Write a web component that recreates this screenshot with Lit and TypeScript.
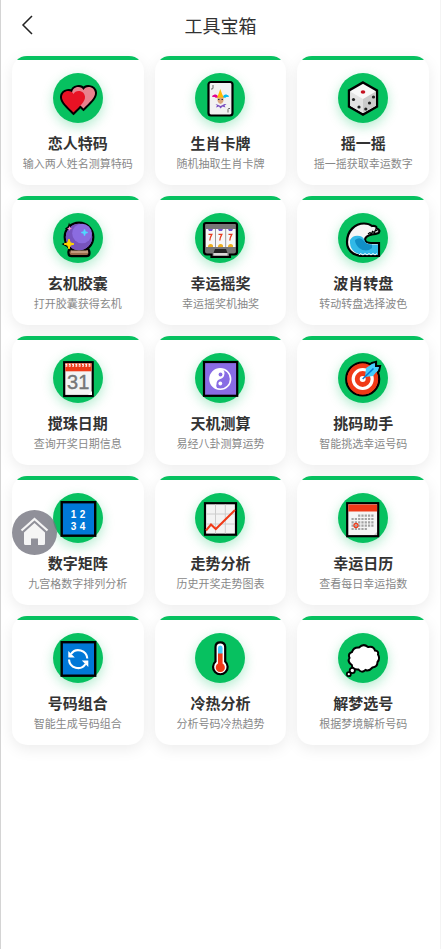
import { LitElement, html, css, svg, type SVGTemplateResult } from "lit";
import { customElement, property } from "lit/decorators.js";

const HEART =
  "M0 -6.5 C-2 -11 -10.5 -10.5 -11.5 -4 C-12 1 -6 6 0 12 C6 6 12 1 11.5 -4 C10.5 -10.5 2 -11 0 -6.5Z";

const icons: Record<string, SVGTemplateResult> = {
  hearts: svg`
    <g stroke="#000" stroke-width="4" stroke-linejoin="miter">
      <path d=${HEART} transform="translate(30.5 23.5)" />
      <path d=${HEART} transform="translate(20.5 27.5)" />
    </g>
    <path d=${HEART} transform="translate(30.5 23.5)" fill="#e8828e" />
    <path d=${HEART} transform="translate(20.5 27.5)" fill="#e81224" />`,
  joker: svg`
    <rect x="13.500" y="9" width="24" height="33.500" rx="2.500" fill="#f2f2f2" stroke="#000" stroke-width="2.200" />
    <path d="M18 12v3q0 1.500-2 1" fill="none" stroke="#666" />
    <path d="M33 39.500v-3q0-1.500 2-1" fill="none" stroke="#666" />
    <path d="M20 24q-3-3-2 0q1-3.500 4-1.500l2 2z" fill="#e3008c" stroke="#e3008c" />
    <path d="M31 24q3-3 2 0q-1-3.500-4-1.500l-2 2z" fill="#00bcf2" stroke="#00bcf2" />
    <path d="M22 25l1.500-4 1.800-5 1.800 5L29 25z" fill="#ffb900" />
    <path d="M20.500 31l3 1 2 1 4-2 2 0-2 1.500 1 2-3-1-2 2-1.500-2-3 1 1-2z" fill="#7a4fc0" />
    <path d="M22.500 24.500h6v3.500q-1 3-3 3T22.500 28z" fill="#d9a47c" />
    <path d="M23 26.500h1.500M26.500 26.500H28" stroke="#333" />`,
  dice: svg`
    <path d="M25 9.500L39 17.500V33.500L25 41.500L11 33.500V17.500Z" fill="#f8f8f8" stroke="#000" stroke-width="2.400" />
    <path d="M12.200 18.500L25 26V40L12.200 32.800Z" fill="#e3e3e3" />
    <path d="M37.800 18.500L25 26V40L37.800 32.800Z" fill="#cbcbcb" />
    <ellipse cx="25" cy="19" rx="2.300" ry="1.700" fill="#c50f1f" />
    <g fill="#222"><circle cx="15.500" cy="26.500" r="1.600" /><circle cx="21" cy="34" r="1.600" />
    <circle cx="35.500" cy="24" r="1.600" /><circle cx="31.500" cy="30" r="1.600" /><circle cx="27.800" cy="36" r="1.600" /></g>`,
  crystal: svg`
    <path d="M17 36q-2 1-1.500 4q0 3.200 3 3.200h15q3 0 3-3.200q0-3.200-2-4.200z" fill="#9a6b4b" stroke="#000" stroke-width="2.200" />
    <circle cx="26" cy="24" r="14.300" fill="#8764d0" stroke="#000" stroke-width="2.200" />
    <path d="M16 9.500l1.500 4 3 1-2 3-3 1-3.500-3 3-2z" fill="#000" />
    <path d="M8.500 31l5-2 2.500-4 4 5 3 2-4 1.500-2 5.500-3-5z" fill="#000" />
    <circle cx="26" cy="24" r="13.200" fill="#7653bd" />
    <circle cx="29" cy="20.500" r="9.800" fill="#8b6ce0" />
    <path d="M18 37.500h17v2.500H18z" fill="#c29a7d" />
    <path d="M16 26l1.300 3.700L21 31l-3.700 1.300L16 36l-1.300-3.700L11 31l3.700-1.300z" fill="#ffd500" stroke="#ffd500" />
    <path d="M31.500 16l1 2.500 2.500 1-2.500 1-1 2.500-1-2.500-2.500-1 2.500-1z" fill="#50d8ff" stroke="#50d8ff" stroke-width=".5" />
    <path d="M16.500 13l.7 1.800 1.800.7-1.800.7-.7 1.800-.7-1.800-1.800-.7 1.800-.7z" fill="#f58ac4" />`,
  slot: svg`
    <path d="M11 10h29q2 0 2 2v27q0 2.500-3 2.500h-4V44H16.500v-2.500H12q-3 0-3-3V12q0-2 2-2z" fill="#767676" stroke="#000" stroke-width="2.200" />
    <path d="M11 16h29.500v18H11z" fill="#f7f7f7" />
    <path d="M20.500 16v18M30.700 16v18" stroke="#999" />
    <path d="M13 16h5l-1 2h-3zM23 16h5l-1 2h-3zM33 16h5l-1 2h-3z" fill="#7357d1" />
    <path d="M13 34q0-3 2.700-3T18 34zM23 34q0-3 2.700-3T28 34zM33 34q0-3 2.700-3T38 34z" fill="#efb020" />
    <g fill="none" stroke="#e83a1c" stroke-width="1.300"><path d="M13.500 21.300h3.300q-1.800 3-2 6.200M23.500 21.300h3.300q-1.800 3-2 6.200M33.500 21.300h3.300q-1.800 3-2 6.200" /></g>
    <path d="M20 36h11l1.500 4h-14z" fill="#222" />
    <path d="M18.500 40h14v2.500h-14z" fill="#d8d8d8" />`,
  wave: svg`
    <path d="M41 43H25C14 43 9 36 9 29C9 18 17 10.500 26 10.500Q31 10.500 34 13Q39 12.500 38.500 15.500Q43 17 40.500 20Q38 21 34 21.500Q27 23 27 27Q28 30 33 30H41Z" fill="#f5f5f5" stroke="#000" stroke-width="2.200" />
    <path d="M12 27Q15 21.500 22 23Q26 24 27 28.500Q29 31.500 33 31.500H40V42H25Q11 40 12 27Z" fill="#31b9e8" />
    <path d="M17 27Q22 23 26 28Q29 32 34 31.500V35Q28 40 21 35Q17 31 17 27Z" fill="#118fc7" />
    <path d="M30 21l2-1.500 1.500 1.500 1-2.500 2 1 1-2.500 2 1" fill="none" stroke="#000" stroke-width="1.300" />
    <path d="M21 42l1.500-1.500L25 42l2-1.500 2 1.500 2-1.500 2 1.500 2-1.500 2 1.500 2-1.500" fill="none" stroke="#fff" />`,
  date: svg`
    <rect x="11.200" y="9.200" width="28.500" height="33.800" fill="#f4f4f4" stroke="#000" stroke-width="2.200" />
    <path d="M12.300 10.300h26.300v8H12.300z" fill="#f03a17" />
    <path d="M12.500 12.200h26" stroke="#fff" stroke-width="3" stroke-dasharray="1.800 1.500" />
    <path d="M12.500 12.700h26" stroke="#f03a17" stroke-width="1" stroke-dasharray=".8 2.500" />
    <text x="25.200" y="36" class="day">31</text>
    <path d="M35 42l4-4v4z" fill="#fff" />`,
  yinyang: svg`
    <rect x="9" y="9" width="33.200" height="33.800" fill="#886ce4" stroke="#000" stroke-width="2.200" />
    <circle cx="25.300" cy="26" r="10.300" fill="none" stroke="#fff" stroke-width="1.600" />
    <path d="M25.300 15.500A10.500 10.500 0 0 0 25.300 36.500A4 4 0 0 1 21.500 31Q21.500 27 25.300 26T29.500 20.500Q29.500 16 25.300 15.500Z" fill="#fff" />
    <circle cx="25.500" cy="21.500" r="1.900" fill="#886ce4" /><circle cx="25.300" cy="30.500" r="1.900" fill="#fff" />`,
  target: svg`
    <circle cx="24.700" cy="26" r="16.500" fill="#f03a17" stroke="#000" stroke-width="2.200" />
    <path d="M26 21l2-7 6-4 4-1v4h4l-1 5-5 6-7 1z" fill="#50d8ff" stroke="#000" stroke-width="2.200" />
    <circle cx="24.700" cy="26" r="15.400" fill="#f03a17" />
    <circle cx="24.700" cy="26" r="9.500" fill="none" stroke="#fff" stroke-width="3.200" />
    <circle cx="24.700" cy="26" r="3" fill="#fff" />
    <path d="M27 24l1-9 6-4 3-.8V14h4l-1 3-5 6z" fill="#45cbfb" />
    <path d="M24.700 26L35.500 15.500" stroke="#0078d4" stroke-width="1.600" />`,
  numbers: svg`
    <rect x="8.700" y="9.200" width="33.500" height="33.500" fill="#0078d7" stroke="#000" stroke-width="2.400" />
    <text x="20.500" y="25" class="cell">1</text><text x="29.500" y="25" class="cell">2</text>
    <text x="20.500" y="37" class="cell">3</text><text x="29.500" y="37" class="cell">4</text>`,
  chart: svg`
    <rect x="10" y="10.200" width="31" height="31.500" fill="#f3f3f3" stroke="#000" stroke-width="2.200" />
    <path d="M20.500 11.500v29M30.300 11.500v29M11.500 21h28.500M11.500 31h28.500" stroke="#ccc" />
    <path d="M11 37.500l5-6 4.800 4.500L40 17" fill="none" stroke="#f03a17" stroke-width="2" />`,
  calendar: svg`
    <rect x="9.200" y="10.200" width="31" height="33" fill="#f5f5f5" stroke="#000" stroke-width="2.200" />
    <path d="M10.300 11.500h28.800v7H10.300z" fill="#f03a17" />
    <g stroke="#a3a3a3" stroke-width="2.200" stroke-dasharray="2.200 1.100">
      <path d="M20.100 22.700h16.500M13.500 26h23M13.500 29.300h23M13.500 32.600h23M13.500 36h16.500" />
    </g>
    <circle cx="18" cy="32.500" r="2" fill="none" stroke="#f03a17" stroke-width="1.300" />
    <path d="M36 42l3-3v3z" fill="#ccc" />`,
  refresh: svg`
    <rect x="8.700" y="9.200" width="33.500" height="33.500" fill="#0078d7" stroke="#000" stroke-width="2.400" />
    <path d="M18 21A9 9 0 0 1 34.300 25.500M16 26.500A9 9 0 0 0 32.500 31" fill="none" stroke="#fff" stroke-width="2.100" />
    <path d="M15.300 18v6.500h6.500zM35.300 34v-6.500h-6.500z" fill="#fff" />`,
  thermo: svg`
    <path d="M20.500 14Q20.500 9.300 25.300 9.300T30.200 14V28.500A7.300 7.300 0 1 1 20.500 28.500Z" fill="#fff" stroke="#000" stroke-width="2.200" />
    <path d="M23 15q0-2.500 2.300-2.500t2.300 2.500v6H23z" fill="#45cbfb" />
    <path d="M23 20.500h4.600V30.500A4.600 4.600 0 1 1 23 30.500Z" fill="#f03a17" />`,
  thought: svg`
    <path d="M21 14.500Q25.500 10 30 14Q35.500 12.500 37 17.500Q41 18 40 21.500Q42.500 25.500 39.500 29Q39.500 34 34.500 34.500Q31 38.500 27.500 37Q23.500 40.500 20.500 36.500Q14 37 13.800 32Q9 28.500 11.500 25Q9.500 20.500 14 19Q15.500 14 21 14.500Z" fill="#fff" stroke="#000" stroke-width="2" />
    <circle cx="14.300" cy="37.500" r="2.600" fill="#fff" stroke="#000" stroke-width="1.800" />
    <circle cx="10.800" cy="41.200" r="2" fill="#fff" stroke="#000" stroke-width="1.800" />`,
};

interface Tool {
  icon: string;
  name: string;
  note: string;
}

const tools: Tool[] = [
  { icon: "hearts", name: "恋人特码", note: "输入两人姓名测算特码" },
  { icon: "joker", name: "生肖卡牌", note: "随机抽取生肖卡牌" },
  { icon: "dice", name: "摇一摇", note: "摇一摇获取幸运数字" },
  { icon: "crystal", name: "玄机胶囊", note: "打开胶囊获得玄机" },
  { icon: "slot", name: "幸运摇奖", note: "幸运摇奖机抽奖" },
  { icon: "wave", name: "波肖转盘", note: "转动转盘选择波色" },
  { icon: "date", name: "搅珠日期", note: "查询开奖日期信息" },
  { icon: "yinyang", name: "天机测算", note: "易经八卦测算运势" },
  { icon: "target", name: "挑码助手", note: "智能挑选幸运号码" },
  { icon: "numbers", name: "数字矩阵", note: "九宫格数字排列分析" },
  { icon: "chart", name: "走势分析", note: "历史开奖走势图表" },
  { icon: "calendar", name: "幸运日历", note: "查看每日幸运指数" },
  { icon: "refresh", name: "号码组合", note: "智能生成号码组合" },
  { icon: "thermo", name: "冷热分析", note: "分析号码冷热趋势" },
  { icon: "thought", name: "解梦选号", note: "根据梦境解析号码" },
];

@customElement("tool-card")
export class ToolCard extends LitElement {
  @property({ attribute: false }) tool!: Tool;

  static styles = css`
    :host {
      display: block;
      min-width: 0;
    }
    .card {
      display: flex;
      flex-direction: column;
      align-items: center;
      box-sizing: border-box;
      padding-bottom: 12px;
      border-radius: 15px;
      background: linear-gradient(#07c160, #07c160) top / 100% 4px no-repeat #fff;
      box-shadow: 0 4px 15px rgba(0, 0, 0, 0.08);
      text-decoration: none;
      text-align: center;
      white-space: nowrap;
    }
    .disc {
      width: 50px;
      height: 50px;
      margin: 17px 0 10px;
      border-radius: 50%;
      background: #07c160;
      box-shadow: 0 4px 12px rgba(7, 193, 96, 0.3);
    }
    .icon {
      display: block;
      width: 50px;
      height: 50px;
      fill: #000;
    }
    .day {
      font: 20px "Liberation Sans", sans-serif;
      fill: #767676;
      stroke: #767676;
      stroke-width: 0.4;
      text-anchor: middle;
    }
    .cell {
      font: bold 10px "Liberation Sans", sans-serif;
      fill: #fff;
      text-anchor: middle;
    }
    .name {
      font-size: 15px;
      line-height: 20px;
      font-weight: 700;
      color: #333;
    }
    .note {
      font-size: 11px;
      line-height: 20px;
      color: #888;
    }
  `;

  render() {
    return html`<a class="card" href="#${this.tool.icon}">
      <span class="disc">
        <svg class="icon" viewBox="0 0 50 50" aria-hidden="true">${icons[this.tool.icon]}</svg>
      </span>
      <span class="name">${this.tool.name}</span>
      <span class="note">${this.tool.note}</span>
    </a>`;
  }
}

@customElement("app-root")
export class AppRoot extends LitElement {
  static styles = css`
    :host {
      display: block;
      box-sizing: border-box;
      min-height: 100vh;
      background: #fff;
      box-shadow: inset 1px 0 #d4d4d4, inset -1px 0 #f4f4f4;
      font-family: "Noto Sans CJK SC", sans-serif;
    }
    .bar {
      display: grid;
      grid-template-columns: 48px 1fr 48px;
      align-items: center;
      height: 50px;
    }
    .back {
      display: flex;
      align-items: center;
      height: 50px;
      padding: 0 0 0 20px;
      border: 0;
      background: none;
      cursor: pointer;
    }
    .chevron {
      width: 14px;
      height: 20px;
      fill: none;
      stroke: #222;
      stroke-width: 1.5;
    }
    .title {
      margin: 0;
      text-align: center;
      font-size: 18px;
      line-height: 24px;
      font-weight: 400;
      color: #333;
    }
    .grid {
      display: grid;
      grid-template-columns: repeat(3, minmax(0, 1fr));
      gap: 11px;
      padding: 6px 12px 24px;
    }
    .home {
      position: fixed;
      left: 12px;
      top: 510px;
      display: block;
      width: 45px;
      height: 45px;
      border-radius: 50%;
      background: rgba(116, 116, 128, 0.8);
    }
    .house {
      display: block;
      width: 45px;
      height: 45px;
    }
  `;

  render() {
    return html`
      <header class="bar">
        <button class="back" aria-label="返回">
          <svg class="chevron" viewBox="0 0 14 20"><path d="M12 1L3 10L12 19" /></svg>
        </button>
        <h1 class="title">工具宝箱</h1>
      </header>
      <main class="grid">
        ${tools.map((tool) => html`<tool-card .tool=${tool}></tool-card>`)}
      </main>
      <a class="home" href="#home" aria-label="首页">
        <svg class="house" viewBox="0 0 45 45">
          <path d="M9.500 20.500L22.500 9L35.500 20.500" fill="none" stroke="#f5f5f5" stroke-width="2.200" />
          <path d="M22.500 13L33 22.500V33.500Q33 35 31.500 35H26V28.500H19V35H13.500Q12 35 12 33.500V22.500Z" fill="#f5f5f5" />
        </svg>
      </a>
    `;
  }
}
